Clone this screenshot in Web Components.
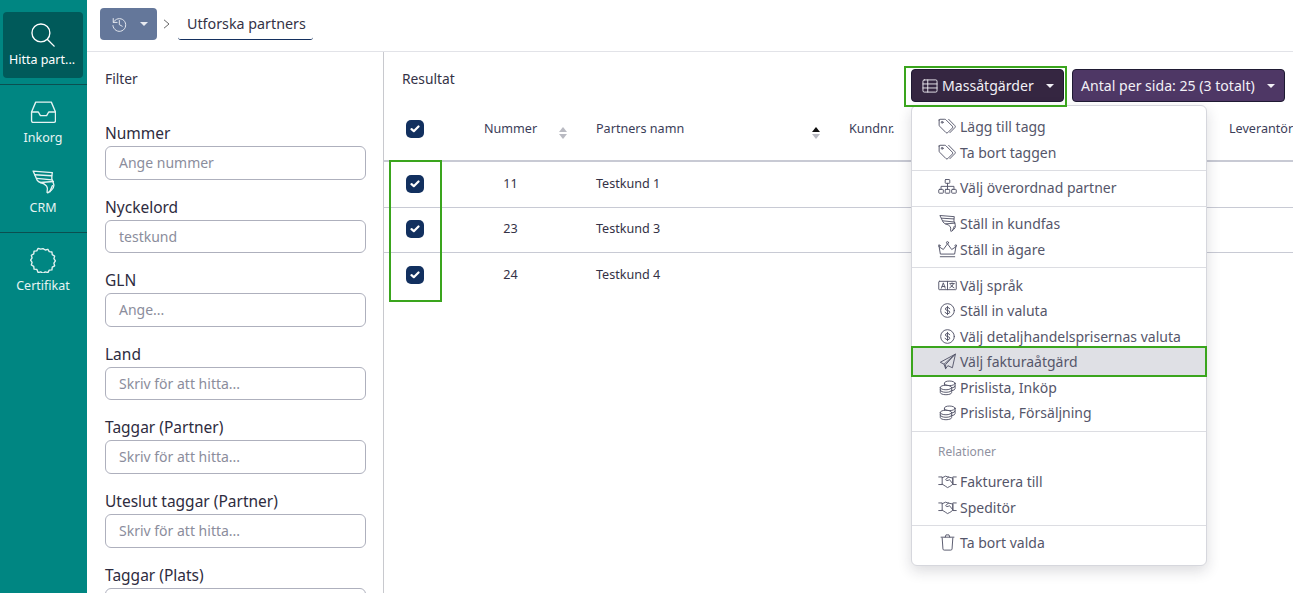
<!DOCTYPE html>
<html lang="sv">
<head>
<meta charset="utf-8">
<title>Utforska partners</title>
<style>
html, body { margin: 0; height: 100%; overflow: hidden; }
body { font-family: "Noto Sans", sans-serif; color: #343246; background: #fff; }
</style>
</head>
<body>
<app-shell>
    <side-nav slot="nav">
        <side-item icon="search" active>Hitta part...</side-item>
        <side-item icon="inbox" rule>Inkorg</side-item>
        <side-item icon="funnel">CRM</side-item>
        <side-item icon="badge" rule>Certifikat</side-item>
    </side-nav>
    <top-bar slot="top"></top-bar>
    <filter-panel slot="filter">
        <filter-field label="Nummer" placeholder="Ange nummer"></filter-field>
        <filter-field label="Nyckelord" placeholder="testkund"></filter-field>
        <filter-field label="GLN" placeholder="Ange..."></filter-field>
        <filter-field label="Land" placeholder="Skriv för att hitta..."></filter-field>
        <filter-field label="Taggar (Partner)" placeholder="Skriv för att hitta..."></filter-field>
        <filter-field label="Uteslut taggar (Partner)" placeholder="Skriv för att hitta..."></filter-field>
        <filter-field label="Taggar (Plats)" placeholder=""></filter-field>
    </filter-panel>
    <result-panel slot="result">
        <mass-menu slot="menu">
            <mass-item icon="tags">Lägg till tagg</mass-item>
            <mass-item icon="tags">Ta bort taggen</mass-item>
            <mass-rule tight></mass-rule>
            <mass-item icon="sitemap">Välj överordnad partner</mass-item>
            <mass-rule tight></mass-rule>
            <mass-item icon="funnel">Ställ in kundfas</mass-item>
            <mass-item icon="crown">Ställ in ägare</mass-item>
            <mass-rule></mass-rule>
            <mass-item icon="language">Välj språk</mass-item>
            <mass-item icon="dollar">Ställ in valuta</mass-item>
            <mass-item icon="dollar">Välj detaljhandelsprisernas valuta</mass-item>
            <mass-item icon="plane" marked>Välj fakturaåtgärd</mass-item>
            <mass-item icon="coins">Prislista, Inköp</mass-item>
            <mass-item icon="coins">Prislista, Försäljning</mass-item>
            <mass-rule></mass-rule>
            <mass-heading>Relationer</mass-heading>
            <mass-item icon="handshake">Fakturera till</mass-item>
            <mass-item icon="handshake">Speditör</mass-item>
            <mass-rule tight></mass-rule>
            <mass-item icon="trash">Ta bort valda</mass-item>
        </mass-menu>
    </result-panel>
</app-shell>

<script>
'use strict';

const ICONS = {
    search: '<circle cx="10.5" cy="10.5" r="8.6"/><path d="M16.8 16.8l6.4 6.4"/>',
    inbox: '<path d="M5.5 3h15l4 9.5V21a1.5 1.5 0 0 1-1.5 1.5H3A1.5 1.5 0 0 1 1.5 21v-8.5z"/><path d="M1.5 12.5H8l2 3.5h6l2-3.5h6.5"/>',
    funnel: '<path d="M3 2l18.500 1.500-.5 3q-.5 3 1 5.500l1 3.500q0 3-2.500 5l-3.500 2.500q-1-.5-.5-1.500.8-3.300-.5-5-2-2.500-6-3.500-2-.5-3-2z"/><path d="M4.500 5.500l16.500 1M6.500 9l14.500 1.500M10 13l12.500-1M19 22l2.500-6"/>',
    badge: '<path d="M12.500 1.500l2.200 1.400 2.500-.7 1.300 2.300 2.600.3.300 2.600 2.300 1.300-.7 2.500 1.400 2.200-1.400 2.200.7 2.500-2.300 1.300-.3 2.600-2.600.3-1.300 2.300-2.500-.7-2.200 1.400-2.200-1.400-2.500.7L6.500 21.500l-2.600-.3-.3-2.600-2.300-1.300.7-2.500L.6 12.600 2 10.400l-.7-2.500 2.300-1.300.3-2.600 2.600-.3 1.300-2.300 2.500.7z"/>',
    tags: '<path d="M1.500 4v6.500q0 1 .7 1.700l8.300 8.300q1.200 1.200 2.400 0l6-6q1.200-1.200 0-2.400l-8.300-8.300Q9.900 3 8.900 3H2.500q-1 0-1 1z"/><circle cx="5.500" cy="7" r="1.200"/><path d="M14 3l8.200 8.400q1.300 1.300 0 2.600l-6.500 6.600"/>',
    sitemap: '<rect x="9.500" y="2" width="6" height="5" rx=".8"/><rect x="1" y="15" width="6" height="5" rx=".8"/><rect x="9.500" y="15" width="6" height="5" rx=".8"/><rect x="18" y="15" width="6" height="5" rx=".8"/><path d="M12.500 7v8M4 15v-4h17v4"/>',
    crown: '<path d="M3 18l-1.500-9 5.500 3.500L12.500 5l5.500 7.500L23.500 9 22 18z"/><circle cx="12.500" cy="3.500" r="1.400"/><circle cx="1.500" cy="7.500" r="1.200"/><circle cx="23.500" cy="7.500" r="1.200"/><path d="M3 22h19"/>',
    language: '<rect x="1" y="7" width="23" height="11" rx=".8"/><path d="M12.500 7v11"/><path d="M4.500 16l2.500-7 2.500 7M5.500 13.800h3.500M15.500 10h6M18.500 9v1M20.500 10q-1 3.500-5 5.500M16.500 11.500q1.500 2.500 4.500 4"/>',
    dollar: '<circle cx="12.500" cy="12.500" r="9"/><path d="M15.500 10.200q-.6-1.700-3-1.700-2.800 0-2.800 2 0 1.500 2.800 2 3 .5 3 2.200 0 2-3 2-2.600 0-3.200-1.900M12.500 7v11"/>',
    plane: '<path d="M22.500 3L3 13.500 8 16l2 6 3-4 5.500 2.500z"/><path d="M22.500 3L8 16M10 22v-5.500L22.500 3"/>',
    coins: '<ellipse cx="15.500" cy="7" rx="7" ry="3"/><path d="M8.500 7v2.500M22.500 7v7q0 1.800-4 2.700M22.500 10.500q0 1.800-4 2.700"/><ellipse cx="10.500" cy="12.500" rx="7.500" ry="3"/><path d="M3 12.500V19c0 1.800 3.300 3 7.500 3s7.500-1.200 7.500-3v-6.500M3 15.800c0 1.800 3.300 3 7.500 3s7.500-1.200 7.500-3"/>',
    handshake: '<path d="M1 6.500h4.500v10H1M24 6.500h-4.500v10H24M5.500 7.500L10 5.500l3 1 6.500 1.500v7.500l-1.500 2-2.500 1.500-3 1.500-3-2-4-2.500"/><path d="M14 6.500l-4 3.500q1 2 3.500 1l1.500-1 4.500 5.500"/>',
    trash: '<path d="M5.500 6.500l1 14.500q.1 1.500 1.700 1.500h8.600q1.600 0 1.700-1.500l1-14.500"/><path d="M4 5.500h17M9.500 5.500l1-3h4l1 3"/>',
    grid: '<rect x="1.500" y="3" width="22" height="19" rx="2"/><path d="M1.500 9.300h22M1.500 15.600h22M9 3v19"/>',
    history: '<path d="M3.500 4v6h6"/><path d="M3.800 10A10 10 0 1 1 3 15"/><path d="M13 7v6.500l4.500 2.500"/>'
};

function iconSvg(name, size, weight) {
    return `<svg viewBox="0 0 25 25" width="${size}" height="${size}" fill="none" stroke="currentColor" stroke-width="${weight}" stroke-linecap="round" stroke-linejoin="round">${ICONS[name]}</svg>`;
}

const CARET = '<svg viewBox="0 0 8 4" width="8" height="4" style="display:block"><path d="M0 0h8L4 4z" fill="currentColor"/></svg>';

class AppShell extends HTMLElement {
    constructor() {
        super();
        this.attachShadow({mode: 'open'}).innerHTML = `
            <style>
            :host {
                display: grid;
                grid-template-columns: 87px 297px 1fr;
                grid-template-rows: 52px 1fr;
                height: 593px;
                width: 1293px;
                overflow: hidden;
            }
            ::slotted([slot=nav]) { grid-row: 1 / 3; }
            ::slotted([slot=top]) { grid-column: 2 / 4; }
            </style>
            <slot name="nav"></slot>
            <slot name="top"></slot>
            <slot name="filter"></slot>
            <slot name="result"></slot>
        `;
    }
}

class SideNav extends HTMLElement {
    constructor() {
        super();
        this.attachShadow({mode: 'open'}).innerHTML = `
            <style>
            :host {
                display: flex;
                flex-direction: column;
                background: #008682;
                overflow: hidden;
            }
            </style>
            <slot></slot>
        `;
    }
}

class SideItem extends HTMLElement {
    constructor() {
        super();
        const name = this.getAttribute('icon');
        this.attachShadow({mode: 'open'}).innerHTML = `
            <style>
            :host {
                display: block;
                color: #e6f3f2;
                font-size: 12.5px;
                text-align: center;
            }
            :host([rule]) { border-top: 1px solid #0b4f50; }
            .item {
                display: flex;
                flex-direction: column;
                align-items: center;
                height: 70px;
                box-sizing: border-box;
                padding: 14px 1px 0 0;
            }
            :host([icon=funnel]) .item { height: 77px; }
            :host([active]) { height: 84px; color: #fff; }
            :host([active]) .item {
                margin: 12px 4px 0 3px;
                height: 66px;
                padding: 10px 2px 0 0;
                border-radius: 4px;
                background: #005a5a;
            }
            svg { display: block; margin-bottom: 4px; }
            :host([active]) svg { margin: 0 0 3px 2px; }
            </style>
            <div class="item">${iconSvg(name, 26, 1.3)}<slot></slot></div>
        `;
    }
}

class TopBar extends HTMLElement {
    constructor() {
        super();
        this.attachShadow({mode: 'open'}).innerHTML = `
            <style>
            :host {
                display: flex;
                align-items: flex-start;
                box-sizing: border-box;
                height: 52px;
                padding: 8px 0 0 13px;
                border-bottom: 1px solid #e2e3e8;
            }
            .history {
                display: flex;
                align-items: center;
                gap: 13px;
                box-sizing: border-box;
                width: 57px;
                height: 32px;
                padding-left: 11px;
                border-radius: 4px;
                background: #64779a;
                color: #e8ebf1;
            }
            .sep { margin: 0 8px 0 6px; height: 32px; display: flex; align-items: center; color: #666; }
            .crumb {
                box-sizing: border-box;
                width: 135px;
                height: 32px;
                padding: 0 9px;
                line-height: 31px;
                font-size: 14.3px;
                white-space: nowrap;
                color: #343246;
                border-bottom: 1px solid #14305f;
                border-radius: 0 0 3px 3px;
            }
            </style>
            <div class="history">${iconSvg('history', 16, 1.5)}${CARET}</div>
            <div class="sep"><svg width="7" height="10" viewBox="0 0 7 10" fill="none" stroke="currentColor"><path d="M1 .8L6 5 1 9.200"/></svg></div>
            <div class="crumb">Utforska partners</div>
        `;
    }
}

class FilterPanel extends HTMLElement {
    constructor() {
        super();
        this.attachShadow({mode: 'open'}).innerHTML = `
            <style>
            :host {
                display: block;
                box-sizing: border-box;
                padding: 0 17px 0 18px;
                border-right: 1px solid #c8c9ce;
                overflow: hidden;
            }
            h2 {
                margin: 0 0 33px;
                padding-top: 17px;
                font-size: 13.8px;
                line-height: 20px;
                font-weight: 400;
                color: #343246;
            }
            </style>
            <h2>Filter</h2>
            <slot></slot>
        `;
    }
}

class FilterField extends HTMLElement {
    constructor() {
        super();
        this.attachShadow({mode: 'open'}).innerHTML = `
            <style>
            :host { display: block; margin-bottom: 16px; }
            label {
                display: block;
                margin-bottom: 2px;
                font-size: 15.5px;
                line-height: 22px;
                white-space: nowrap;
                color: #2e2c40;
            }
            .box {
                box-sizing: border-box;
                height: 33.6px;
                padding: 0 13px;
                border: 1px solid #aeb0bd;
                border-radius: 6px;
                font-size: 14px;
                line-height: 31px;
                color: #8b8d9c;
            }
            </style>
            <label>${this.getAttribute('label')}</label>
            <div class="box">${this.getAttribute('placeholder')}</div>
        `;
    }
}

class CheckBox extends HTMLElement {
    constructor() {
        super();
        this.attachShadow({mode: 'open'}).innerHTML = `
            <style>
            :host {
                display: inline-flex;
                align-items: center;
                justify-content: center;
                width: 18px;
                height: 18px;
                border-radius: 5px;
                background: #12305f;
                vertical-align: middle;
            }
            </style>
            <svg width="10" height="8" viewBox="0 0 10 8" fill="none" stroke="#fff" stroke-width="2.2" stroke-linecap="round" stroke-linejoin="round"><path d="M1.500 4.200L3.800 6.200 8.500 1.500"/></svg>
        `;
    }
}

class SortMark extends HTMLElement {
    constructor() {
        super();
        const up = this.hasAttribute('up') ? '#111' : '#b9bac2';
        this.attachShadow({mode: 'open'}).innerHTML = `
            <style>:host { display: inline-block; width: 8px; height: 12px; }</style>
            <svg width="8" height="12" viewBox="0 0 8 12" style="display:block"><path d="M4 0l4 5H0z" fill="${up}"/><path d="M4 12L0 7h8z" fill="#b9bac2"/></svg>
        `;
    }
}

class ResultPanel extends HTMLElement {
    constructor() {
        super();
        const rows = [['11', 'Testkund 1'], ['23', 'Testkund 3'], ['24', 'Testkund 4']];
        this.attachShadow({mode: 'open'}).innerHTML = `
            <style>
            :host {
                display: block;
                position: relative;
                overflow: hidden;
                min-width: 0;
            }
            .head {
                display: flex;
                align-items: flex-start;
                height: 52px;
                padding: 18px 8px 0 18px;
                box-sizing: border-box;
                gap: 8px;
            }
            .title { flex: 1; font-size: 13.8px; line-height: 18px; color: #343246; }
            .btn {
                display: flex;
                align-items: center;
                box-sizing: border-box;
                height: 33px;
                margin-top: -1px;
                border: 1px solid #1f1a33;
                border-radius: 4px;
                font-size: 14.1px;
                color: #f2f0f6;
                white-space: nowrap;
            }
            .mass { width: 153px; padding-left: 10px; gap: 4px; background: #352641; }
            .caret { margin-left: auto; margin-right: 9px; display: flex; }
            .page { width: 213px; padding-left: 8px; background: #4e3765; }
            table {
                border-collapse: collapse;
                table-layout: fixed;
                width: 1000px;
                font-size: 12.6px;
                color: #343246;
            }
            th, td { box-sizing: border-box; }
            th { font-weight: 400; height: 57px; padding: 0 0 7px; text-align: left; border-bottom: 2px solid #c8cad4; color: #3b3d58; }
            td { height: 46px; padding: 0 0 2px; border-bottom: 1px solid #c8cad4; }
            tr:nth-child(2) td { height: 45px; }
            tr:last-child td { border-bottom: 0; }
            .c { text-align: center; }
            th.pad, td.pad { padding-left: 21px; }
            .num, .name { position: relative; }
            .num sort-mark, .name sort-mark { position: absolute; top: 50%; margin-top: -5px; }
            .num sort-mark { left: 113px; }
            .name sort-mark { left: 237px; }
            .mark { position: absolute; box-sizing: border-box; border: 2px solid #3aa51d; pointer-events: none; }
            .m1 { left: 520px; top: 14px; width: 163px; height: 41px; }
            .m2 { left: 5px; top: 108px; width: 53px; height: 142px; }
            </style>
            <div class="head">
                <div class="title">Resultat</div>
                <div class="btn mass">${iconSvg('grid', 16, 1.4)}Massåtgärder<span class="caret">${CARET}</span></div>
                <div class="btn page">Antal per sida: 25 (3 totalt)<span class="caret">${CARET}</span></div>
            </div>
            <table>
                <colgroup><col style="width:62px"><col style="width:129px"><col style="width:253px"><col style="width:380px"><col style="width:176px"></colgroup>
                <thead>
                    <tr>
                        <th class="c"><check-box></check-box></th>
                        <th class="c num">Nummer<sort-mark></sort-mark></th>
                        <th class="pad name">Partners namn<sort-mark up></sort-mark></th>
                        <th class="pad">Kundnr.</th>
                        <th class="pad">Leverantör</th>
                    </tr>
                </thead>
                <tbody>
                    ${rows.map(r => `<tr><td class="c"><check-box></check-box></td><td class="c">${r[0]}</td><td class="pad">${r[1]}</td><td></td><td></td></tr>`).join('')}
                </tbody>
            </table>
            <slot name="menu"></slot>
            <div class="mark m1"></div>
            <div class="mark m2"></div>
        `;
    }
}

class MassMenu extends HTMLElement {
    constructor() {
        super();
        this.attachShadow({mode: 'open'}).innerHTML = `
            <style>
            :host {
                position: absolute;
                left: 527px;
                top: 53px;
                width: 296px;
                height: 461px;
                box-sizing: border-box;
                padding: 7.75px 0 0;
                background: #fff;
                border: 1px solid #d6d7dd;
                border-radius: 6px;
                box-shadow: 0 5px 14px rgba(30, 30, 50, .16);
            }
            </style>
            <slot></slot>
        `;
    }
}

class MassItem extends HTMLElement {
    constructor() {
        super();
        this.attachShadow({mode: 'open'}).innerHTML = `
            <style>
            :host {
                display: flex;
                align-items: center;
                gap: 3px;
                box-sizing: border-box;
                height: 25.5px;
                padding-left: 26px;
                font-size: 14px;
                color: #55566a;
                white-space: nowrap;
            }
            :host([marked]) {
                position: relative;
                z-index: 0;
            }
            :host([marked])::before {
                content: "";
                position: absolute;
                inset: -2.5px -1px -2.5px -1px;
                z-index: -1;
                box-sizing: border-box;
                background: #dfe0e5;
                border: 2px solid #3aa51d;
            }
            svg { flex: none; }
            </style>
            ${iconSvg(this.getAttribute('icon'), 19, 1.25)}<slot></slot>
        `;
    }
}

class MassRule extends HTMLElement {
    constructor() {
        super();
        this.attachShadow({mode: 'open'}).innerHTML = `
            <style>
            :host { display: block; height: 1px; margin: 5.25px 0 4.25px; background: #dcdde2; }
            :host([tight]) { margin-top: 5px; }
            </style>
        `;
    }
}

class MassHeading extends HTMLElement {
    constructor() {
        super();
        this.attachShadow({mode: 'open'}).innerHTML = `
            <style>
            :host {
                display: block;
                height: 33px;
                padding: 8.5px 0 0 26px;
                box-sizing: border-box;
                font-size: 12px;
                line-height: 16px;
                color: #8f91a0;
            }
            </style>
            <slot></slot>
        `;
    }
}

customElements.define('app-shell', AppShell);
customElements.define('side-nav', SideNav);
customElements.define('side-item', SideItem);
customElements.define('top-bar', TopBar);
customElements.define('filter-panel', FilterPanel);
customElements.define('filter-field', FilterField);
customElements.define('check-box', CheckBox);
customElements.define('sort-mark', SortMark);
customElements.define('result-panel', ResultPanel);
customElements.define('mass-menu', MassMenu);
customElements.define('mass-item', MassItem);
customElements.define('mass-rule', MassRule);
customElements.define('mass-heading', MassHeading);
</script>
</body>
</html>
